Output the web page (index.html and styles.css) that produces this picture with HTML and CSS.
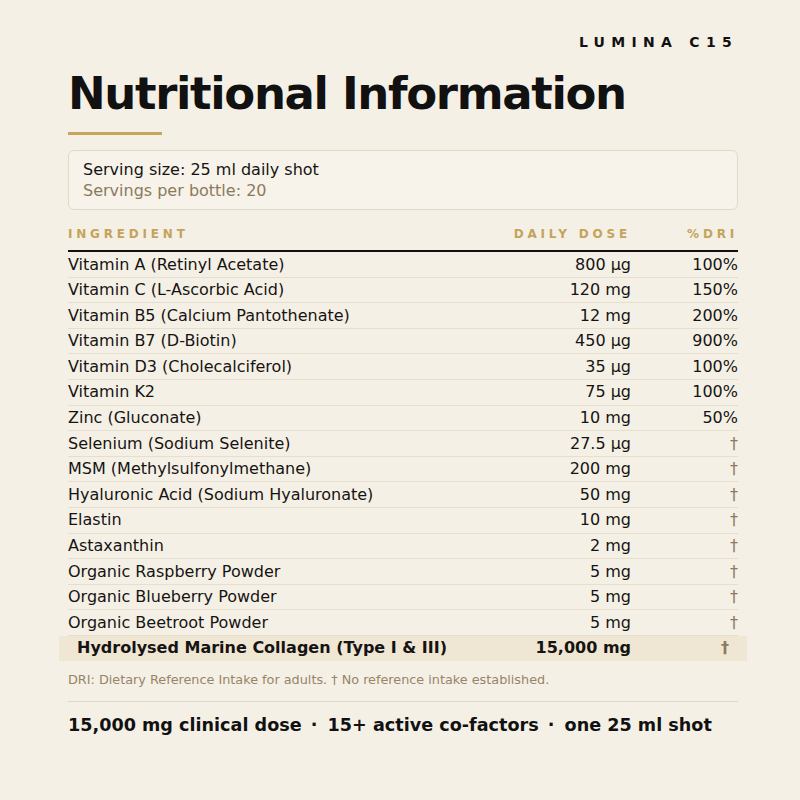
FILE: index.html
```html
<!DOCTYPE html>
<html lang="en">
<head>
<meta charset="utf-8">
<title>Nutritional Information</title>
<link rel="stylesheet" href="styles.css">
</head>
<body>
<main class="page">
  <div class="brand">LUMINA C15</div>
  <h1 class="title">Nutritional Information</h1>
  <div class="rule"></div>
  <section class="serving">
    <div class="serving-size">Serving size: 25 ml daily shot</div>
    <div class="serving-count">Servings per bottle: 20</div>
  </section>
  <div class="table">
    <div class="row head">
      <div>INGREDIENT</div>
      <div class="num">DAILY DOSE</div>
      <div class="num">%DRI</div>
    </div>
    <div class="row"><div>Vitamin A (Retinyl Acetate)</div><div class="num">800 µg</div><div class="num">100%</div></div>
    <div class="row"><div>Vitamin C (L-Ascorbic Acid)</div><div class="num">120 mg</div><div class="num">150%</div></div>
    <div class="row"><div>Vitamin B5 (Calcium Pantothenate)</div><div class="num">12 mg</div><div class="num">200%</div></div>
    <div class="row"><div>Vitamin B7 (D-Biotin)</div><div class="num">450 µg</div><div class="num">900%</div></div>
    <div class="row"><div>Vitamin D3 (Cholecalciferol)</div><div class="num">35 µg</div><div class="num">100%</div></div>
    <div class="row"><div>Vitamin K2</div><div class="num">75 µg</div><div class="num">100%</div></div>
    <div class="row"><div>Zinc (Gluconate)</div><div class="num">10 mg</div><div class="num">50%</div></div>
    <div class="row"><div>Selenium (Sodium Selenite)</div><div class="num">27.5 µg</div><div class="num dag">†</div></div>
    <div class="row"><div>MSM (Methylsulfonylmethane)</div><div class="num">200 mg</div><div class="num dag">†</div></div>
    <div class="row"><div>Hyaluronic Acid (Sodium Hyaluronate)</div><div class="num">50 mg</div><div class="num dag">†</div></div>
    <div class="row"><div>Elastin</div><div class="num">10 mg</div><div class="num dag">†</div></div>
    <div class="row"><div>Astaxanthin</div><div class="num">2 mg</div><div class="num dag">†</div></div>
    <div class="row"><div>Organic Raspberry Powder</div><div class="num">5 mg</div><div class="num dag">†</div></div>
    <div class="row"><div>Organic Blueberry Powder</div><div class="num">5 mg</div><div class="num dag">†</div></div>
    <div class="row"><div>Organic Beetroot Powder</div><div class="num">5 mg</div><div class="num dag">†</div></div>
    <div class="row hero"><div class="hero-name">Hydrolysed Marine Collagen (Type I &amp; III)</div><div class="num">15,000 mg</div><div class="num dag hero-dag">†</div></div>
  </div>
  <p class="note">DRI: Dietary Reference Intake for adults. † No reference intake established.</p>
  <div class="divider"></div>
  <p class="tagline">15,000 mg clinical dose <span class="sep">·</span> 15+ active co-factors <span class="sep">·</span> one 25 ml shot</p>
</main>
</body>
</html>
```
FILE: styles.css
```css
html, body {
  margin: 0;
  padding: 0;
  background: #f5f0e6;
}
body {
  font-family: "DejaVu Sans", "Liberation Sans", sans-serif;
  color: #161412;
}
.page {
  padding: 34px 62px 0 68px;
  display: flex;
  flex-direction: column;
}
.brand {
  align-self: flex-end;
  font-size: 14px;
  font-weight: bold;
  letter-spacing: 6.3px;
  color: #111;
}
.title {
  margin: 17px 0 0;
  font-size: 45px;
  font-weight: bold;
  letter-spacing: -1.35px;
  line-height: normal;
  color: #111;
}
.rule {
  width: 94px;
  height: 3px;
  background: #c9a55c;
  margin-top: 12px;
}
.serving {
  margin-top: 15px;
  border: 1px solid #e2d9c7;
  border-radius: 6px;
  padding: 8px 14px;
  background: #f7f3ea;
  font-size: 16px;
  line-height: 21px;
}
.serving-count {
  color: #8c7a5c;
}
.table {
  margin-top: 16px;
  display: flex;
  flex-direction: column;
}
.row {
  display: grid;
  grid-template-columns: 1fr 140px 107px;
  font-size: 16px;
  line-height: 21.6px;
  padding: 1.5px 0;
  border-bottom: 1px solid #e6dece;
}
.head {
  font-size: 12px;
  font-weight: bold;
  letter-spacing: 3.8px;
  color: #c4a35a;
  line-height: 16px;
  padding: 0 0 8px;
  border-bottom: 2px solid #111;
}
.num {
  text-align: right;
}
.dag {
  color: #8a7a62;
}
.hero {
  margin: 0 -9px;
  padding: 1.5px 9px 2px;
  background: #efe6d4;
  border-bottom: none;
  font-weight: bold;
}
.hero-name {
  padding-left: 9px;
}
.hero-dag {
  padding-right: 9px;
}
.note {
  margin: 10px 0 0;
  font-size: 12.8px;
  line-height: 18px;
  color: #968567;
}
.divider {
  height: 1px;
  background: #e0d7c5;
  margin-top: 12px;
}
.tagline {
  margin: 12px 0 0;
  font-size: 17.6px;
  font-weight: bold;
  line-height: 23px;
  color: #111;
}
.sep {
  margin: 0 4px 0 3px;
}
```
